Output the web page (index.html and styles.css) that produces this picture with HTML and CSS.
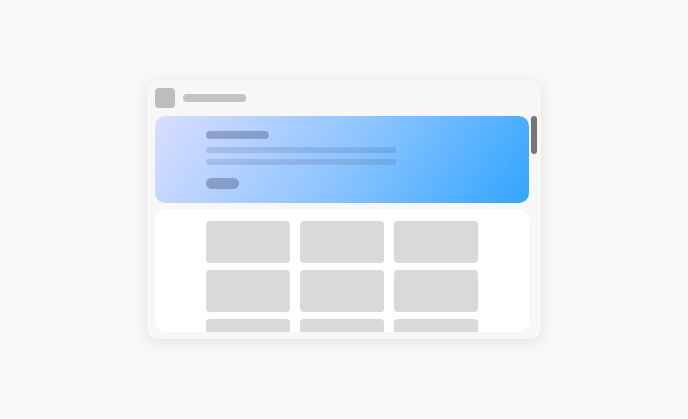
FILE: index.html
```html
<!DOCTYPE html>
<html>
<head>
<meta charset="utf-8">
<link rel="stylesheet" href="styles.css">
</head>
<body>
<div class="card">
  <div class="header">
    <div class="app-icon"></div>
    <div class="app-title"></div>
  </div>
  <div class="body">
    <div class="content">
      <div class="banner">
        <div class="b-title"></div>
        <div class="b-line"></div>
        <div class="b-line"></div>
        <div class="b-btn"></div>
      </div>
      <div class="panel">
        <div class="grid">
          <div class="tile"></div><div class="tile"></div><div class="tile"></div>
          <div class="tile"></div><div class="tile"></div><div class="tile"></div>
          <div class="tile"></div><div class="tile"></div><div class="tile"></div>
        </div>
      </div>
    </div>
    <div class="track"><div class="thumb"></div></div>
  </div>
</div>
</body>
</html>
```
FILE: styles.css
```css
html, body {
  margin: 0;
  height: 100%;
}
body {
  background: #f8f8f8;
  display: flex;
  align-items: center;
  justify-content: center;
  font-family: "Liberation Sans", Arial, sans-serif;
}
.card {
  width: 394px;
  height: 259px;
  box-sizing: border-box;
  padding: 8px 4px 7px 8px;
  background: #f7f7f7;
  border-radius: 10px;
  box-shadow: 0 3px 14px rgba(0, 0, 0, 0.09), 0 0 2px rgba(0, 0, 0, 0.04);
  display: flex;
  flex-direction: column;
  gap: 8px;
}
.header {
  display: flex;
  align-items: center;
  gap: 8px;
  height: 20px;
}
.app-icon {
  width: 20px;
  height: 20px;
  border-radius: 4px;
  background: #bdbdbd;
}
.app-title {
  width: 63px;
  height: 8px;
  border-radius: 4px;
  background: #c4c4c4;
}
.body {
  display: flex;
  gap: 2px;
  height: 216px;
}
.content {
  width: 374px;
  display: flex;
  flex-direction: column;
  gap: 6px;
}
.banner {
  height: 87px;
  box-sizing: border-box;
  padding: 15px 51px 0;
  border-radius: 10px;
  background: linear-gradient(124deg, #d9ddff 0%, #8fc5ff 50%, #31a5ff 100%);
  display: flex;
  flex-direction: column;
}
.b-title {
  width: 63px;
  height: 8px;
  border-radius: 4px;
  background: rgba(55, 70, 105, 0.36);
}
.b-line {
  width: 190px;
  height: 6px;
  border-radius: 3px;
  background: rgba(55, 70, 105, 0.16);
  margin-top: 8px;
}
.b-line + .b-line {
  margin-top: 6px;
}
.b-btn {
  width: 33px;
  height: 11px;
  border-radius: 5.5px;
  background: rgba(55, 70, 105, 0.36);
  margin-top: 13px;
}
.panel {
  flex: 1;
  background: #ffffff;
  border-radius: 10px;
  overflow: hidden;
  padding-top: 12px;
  box-sizing: border-box;
}
.grid {
  display: grid;
  grid-template-columns: repeat(3, 84px);
  grid-auto-rows: 42px;
  column-gap: 10px;
  row-gap: 7px;
  justify-content: center;
}
.tile {
  background: #d9d9d9;
  border-radius: 4px;
}
.track {
  width: 6px;
}
.thumb {
  height: 38px;
  border-radius: 3px;
  background: #767676;
}
```
